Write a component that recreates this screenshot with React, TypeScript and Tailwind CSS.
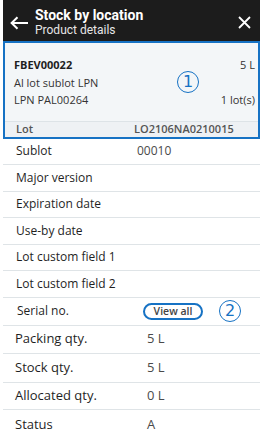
import React from "react";

type Row = { label: string; value?: string; h: string; text: string; pl: string; lw: string; button?: boolean };

const rows: Row[] = [
  { label: "Sublot", value: "00010", h: "h-[26px]", text: "text-[12px]", pl: "pl-[13px]", lw: "w-[121px]" },
  { label: "Major version", h: "h-[27px]", text: "text-[12px]", pl: "pl-[13px]", lw: "w-[121px]" },
  { label: "Expiration date", h: "h-[26px]", text: "text-[12px]", pl: "pl-[13px]", lw: "w-[121px]" },
  { label: "Use-by date", h: "h-[27px]", text: "text-[12px]", pl: "pl-[13px]", lw: "w-[121px]" },
  { label: "Lot custom field 1", h: "h-[26px]", text: "text-[12px]", pl: "pl-[13px]", lw: "w-[121px]" },
  { label: "Lot custom field 2", h: "h-[27px]", text: "text-[12px]", pl: "pl-[13px]", lw: "w-[121px]" },
  { label: "Serial no.", h: "h-[28px]", text: "text-[12px]", pl: "pl-[14px]", lw: "w-[126px]", button: true },
  { label: "Packing qty.", value: "5 L", h: "h-[28px]", text: "text-[13px]", pl: "pl-[12px]", lw: "w-[132px]" },
  { label: "Stock qty.", value: "5 L", h: "h-[29px]", text: "text-[13px]", pl: "pl-[12px]", lw: "w-[132px]" },
  { label: "Allocated qty.", value: "0 L", h: "h-[27px]", text: "text-[13px]", pl: "pl-[12px]", lw: "w-[132px]" },
  { label: "Status", value: "A", h: "h-[30px]", text: "text-[13px]", pl: "pl-[12px]", lw: "w-[132px]" },
];

function Circled({ n }: { n: string }) {
  return (
    <div className="w-[22px] h-[22px] rounded-full border-[1.5px] border-[#1672c4] flex items-center justify-center text-[#1672c4] text-[16px] leading-none [font-family:'DejaVu_Sans',sans-serif]">
      {n}
    </div>
  );
}

export default function App() {
  return (
    <div className="w-[264px] h-[436px] bg-white overflow-hidden [font-family:'Open_Sans',sans-serif]">
      <div className="ml-[3px] w-[257px]">
        <div className="h-[41px] bg-[#1c1c1c] flex items-start text-white">
          <svg width="18" height="14" viewBox="0 0 18 14" className="ml-[7px] mt-[16px]" fill="none" stroke="white" strokeWidth="2" strokeLinecap="square">
            <path d="M2 7H17" />
            <path d="M7.5 1.2L1.6 7L7.5 12.8" strokeLinecap="butt" />
          </svg>
          <div className="ml-[7px] pt-[7px] flex flex-col [font-family:Roboto,sans-serif]">
            <div className="text-[14px] leading-[16px] font-bold">Stock by location</div>
            <div className="text-[12px] leading-[15px] text-[#e6e6e6]">Product details</div>
          </div>
          <svg width="13" height="13" viewBox="0 0 13 13" className="ml-auto mr-[9px] mt-[16px]" fill="none" stroke="white" strokeWidth="1.8">
            <path d="M1 1L12 12M12 1L1 12" />
          </svg>
        </div>

        <div className="relative border-2 border-[#1672c4] bg-[#f3f6f8]">
          <div className="pl-[9px] pr-[3px] pt-[13px] pb-[12px] text-[11px] leading-[17.5px] text-[#333]">
            <div className="flex justify-between">
              <span className="font-bold text-[#1f1f1f]">FBEV00022</span>
              <span>5 L</span>
            </div>
            <div>Al lot sublot LPN</div>
            <div className="flex justify-between">
              <span>LPN PAL00264</span>
              <span>1 lot(s)</span>
            </div>
          </div>
          <div className="h-[16px] border-t border-[#dde3e7] bg-[#eef1f4] flex items-center text-[11px] font-semibold text-[#555]">
            <span className="pl-[11px] w-[129px]">Lot</span>
            <span>LO2106NA0210015</span>
          </div>
          <div className="absolute left-[172px] top-[28px]">
            <Circled n="1" />
          </div>
        </div>

        <div>
          {rows.map((r, i) => (
            <div
              key={r.label}
              className={`${r.h} ${r.text} ${r.pl} flex items-center ${i < rows.length - 1 ? "border-b border-[#dfe4e7]" : ""}`}
            >
              <span className={`${r.lw} shrink-0 text-[#1f1f1f]`}>{r.label}</span>
              {r.button ? (
                <div className="flex items-center">
                  <div className="w-[60px] h-[17px] rounded-full border-2 border-[#1672c4] bg-white flex items-center justify-center text-[10.5px] font-semibold text-[#444] leading-none">
                    View all
                  </div>
                  <div className="ml-[16px]">
                    <Circled n="2" />
                  </div>
                </div>
              ) : (
                <span className="text-[#4a4a4a]">{r.value}</span>
              )}
            </div>
          ))}
        </div>
      </div>
    </div>
  );
}
